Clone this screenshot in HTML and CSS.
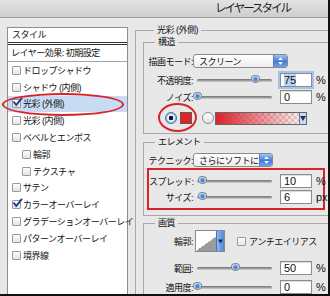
FILE: index.html
```html
<!doctype html>
<html>
<head>
  <meta charset="utf-8">
  <title>レイヤースタイル</title>
  <link rel="stylesheet" href="styles.css">
</head>
<body>
<div class="window">
  <div class="titlebar">レイヤースタイル</div>

  <div class="dialog">
    <div class="styles-panel">
      <div class="panel-head">スタイル</div>
      <div class="panel-preset">レイヤー効果: 初期設定</div>
      <ul class="fx-list">
        <li><span class="cb"></span>ドロップシャドウ</li>
        <li><span class="cb"></span>シャドウ (内側)</li>
        <li class="selected"><span class="cb checked"><svg width="11" height="10" viewBox="0 0 11 10"><path d="M1.5 4.5 L4.2 8 L10 0.8" fill="none" stroke="#1c3b8c" stroke-width="1.9"/></svg></span>光彩 (外側)<span class="ring"></span></li>
        <li><span class="cb"></span>光彩 (内側)</li>
        <li><span class="cb"></span>ベベルとエンボス</li>
        <li class="sub"><span class="cb"></span>輪郭</li>
        <li class="sub"><span class="cb"></span>テクスチャ</li>
        <li><span class="cb"></span>サテン</li>
        <li><span class="cb checked"><svg width="11" height="10" viewBox="0 0 11 10"><path d="M1.5 4.5 L4.2 8 L10 0.8" fill="none" stroke="#1c3b8c" stroke-width="1.9"/></svg></span>カラーオーバーレイ</li>
        <li><span class="cb"></span>グラデーションオーバーレイ</li>
        <li><span class="cb"></span>パターンオーバーレイ</li>
        <li><span class="cb"></span>境界線</li>
      </ul>
    </div>

    <div class="settings">
      <fieldset class="group outer">
        <legend>光彩 (外側)</legend>

        <fieldset class="group structure">
          <legend>構造</legend>
          <div class="row r-mode">
            <span class="label">描画モード:</span>
            <span class="select wide">スクリーン<span class="stepper"><svg width="14" height="12" viewBox="0 0 14 12"><path d="M7 2 L4.5 5 L9.5 5 Z M4.5 7 L9.5 7 L7 10 Z" fill="#fff"/></svg></span></span>
          </div>
          <div class="row r-opacity">
            <span class="label">不透明度:</span>
            <span class="slider"><span class="knob" style="left: 77%"></span></span>
            <span class="num focus"><span class="sel">75</span></span>
            <span class="unit">%</span>
          </div>
          <div class="row r-noise">
            <span class="label">ノイズ:</span>
            <span class="slider"><span class="knob" style="left: 0%"></span></span>
            <span class="num">0</span>
            <span class="unit">%</span>
          </div>
          <div class="row r-color">
            <span class="radio on"></span>
            <span class="swatch"></span>
            <span class="radio"></span>
            <span class="gradient"><span class="grad-drop"><svg width="6" height="5" viewBox="0 0 6 5"><path d="M0 0 L6 0 L3 5 Z" fill="#1b2f6b"/></svg></span></span>
            <span class="ring ring-color"></span>
          </div>
        </fieldset>

        <fieldset class="group element">
          <legend>エレメント</legend>
          <div class="row r-tech">
            <span class="label">テクニック:</span>
            <span class="select narrow">さらにソフトに<span class="stepper"><svg width="14" height="12" viewBox="0 0 14 12"><path d="M7 2 L4.5 5 L9.5 5 Z M4.5 7 L9.5 7 L7 10 Z" fill="#fff"/></svg></span></span>
          </div>
          <div class="hl">
            <div class="row">
              <span class="label">スプレッド:</span>
              <span class="slider"><span class="knob" style="left: 7%"></span></span>
              <span class="num">10</span>
              <span class="unit">%</span>
            </div>
            <div class="row r-size">
              <span class="label">サイズ:</span>
              <span class="slider"><span class="knob" style="left: 6%"></span></span>
              <span class="num">6</span>
              <span class="unit">px</span>
            </div>
          </div>
        </fieldset>

        <fieldset class="group quality">
          <legend>画質</legend>
          <div class="row r-contour">
            <span class="label">輪郭:</span>
            <span class="contour"><span class="contour-drop"><svg width="5" height="5" viewBox="0 0 5 5"><path d="M0 0.5 L5 0.5 L2.5 4.5 Z" fill="#14285e"/></svg></span></span>
            <span class="cb aa"></span>
            <span>アンチエイリアス</span>
          </div>
          <div class="row r-range">
            <span class="label">範囲:</span>
            <span class="slider"><span class="knob" style="left: 50%"></span></span>
            <span class="num">50</span>
            <span class="unit">%</span>
          </div>
          <div class="row r-jitter">
            <span class="label">適用度:</span>
            <span class="slider"><span class="knob" style="left: 0%"></span></span>
            <span class="num">0</span>
            <span class="unit">%</span>
          </div>
        </fieldset>
      </fieldset>
    </div>
  </div>
</div>
</body>
</html>
```

FILE: styles.css
```css
* {
  box-sizing: border-box;
}

body {
  margin: 0;
  background: #fff;
}

.window {
  width: 330px;
  height: 296px;
  overflow: hidden;
  border-right: 2px solid #111;
  border-bottom: 2px solid #111;
  background: #e8e8e8;
  font-family: "Liberation Sans", "Noto Sans CJK JP", sans-serif;
  font-size: 9px;
  letter-spacing: -0.5px;
  white-space: nowrap;
  color: #111;
}

.titlebar {
  height: 18px;
  padding-left: 215px;
  border-bottom: 1px solid #9d9d9d;
  background: linear-gradient(#e3e3e3, #cecece);
  font-size: 11.5px;
  letter-spacing: -2px;
  line-height: 17px;
  color: #1b1b1b;
}

.dialog {
  display: flex;
  align-items: flex-start;
}

/* left list of effects */

.styles-panel {
  flex: none;
  width: 121px;
  height: 300px;
  margin: 9px 0 0 7px;
  border: 1px solid #8d8d8d;
  background: #fff;
}

.panel-head {
  height: 17px;
  padding-left: 4px;
  border-bottom: 3px double #333;
  line-height: 14px;
}

.panel-preset {
  height: 17px;
  padding-left: 3px;
  border-bottom: 1px solid #a5a5a5;
  line-height: 16px;
}

.fx-list {
  margin: 0;
  padding: 0;
  list-style: none;
}

.fx-list li {
  position: relative;
  display: flex;
  align-items: center;
  height: 16.8px;
  padding-left: 4px;
}

.fx-list li.sub {
  padding-left: 14px;
}

.fx-list li.selected {
  background: #c8dbf3;
}

.cb {
  position: relative;
  flex: none;
  width: 9px;
  height: 9px;
  margin-right: 2px;
  border: 1px solid #9a9a9a;
  border-radius: 1px;
  background: linear-gradient(#fdfdfd, #e4e4e4);
}

.cb svg {
  position: absolute;
  left: -1px;
  top: -3px;
}

.ring {
  position: absolute;
  border: 2px solid #d7242b;
  border-radius: 50%;
}

.fx-list .ring {
  left: -6px;
  top: -3px;
  width: 122px;
  height: 23px;
}

/* right settings */

.settings {
  flex: none;
  width: 210px;
  margin-left: 7px;
}

.group {
  min-width: 0;
  margin: 0;
  padding: 0;
  border: 1px solid #a9a9a9;
}

.group legend {
  margin-left: 11px;
  padding: 0 3px;
  line-height: 12px;
}

.outer {
  margin-top: 6px;
  padding-left: 7px;
  height: 300px;
}

.structure {
  padding-bottom: 8px;
}

.element {
  margin-top: 2px;
  padding-bottom: 5px;
}

.quality {
  margin-top: 1px;
  height: 120px;
}

.row {
  position: relative;
  display: flex;
  align-items: center;
  height: 14px;
}

.label {
  flex: none;
  width: 49px;
  text-align: right;
}

.r-mode { margin-top: 6px; }
.r-opacity { margin-top: 5px; }
.r-noise { margin-top: 3px; }
.r-color { margin-top: 7px; }
.r-tech { margin-top: 5px; }
.r-size { margin-top: 2px; }
.r-contour { margin-top: 1px; height: 22px; }
.r-range { margin-top: 9px; }
.r-jitter { margin-top: 5px; }

.select {
  display: flex;
  align-items: center;
  height: 14px;
  padding-left: 5px;
  border: 1px solid #8a8a8a;
  border-radius: 3px;
  background: linear-gradient(#fff, #eee);
  overflow: hidden;
}

.select.wide { width: 95px; }
.select.narrow { width: 80px; }

.stepper {
  display: flex;
  align-items: center;
  justify-content: center;
  flex: none;
  width: 14px;
  height: 100%;
  margin-left: auto;
  border-left: 1px solid #5a7fb8;
  background: linear-gradient(#9cc3f3, #3f7cd6 55%, #6ea3ea);
}

.slider {
  position: relative;
  flex: none;
  width: 75px;
  height: 10px;
  margin-left: 4px;
}

.slider::before {
  content: "";
  position: absolute;
  left: 0;
  right: 0;
  top: 4px;
  height: 3px;
  border-radius: 2px;
  background: linear-gradient(#6e6e6e, #cfcfcf);
}

.knob {
  position: absolute;
  top: 0;
  width: 9px;
  height: 8px;
  margin-left: -4px;
  border: 1px solid #7d8797;
  border-radius: 50% 50% 50% 50% / 45% 45% 55% 55%;
  background: radial-gradient(circle at 50% 55%, #4d86d4 0 1.5px, #a9c4ea 2.5px, #eef2f8 4px);
}

.num {
  flex: none;
  width: 32px;
  height: 14px;
  margin-left: 8px;
  padding-left: 3px;
  border: 1px solid #8c8c8c;
  background: #fff;
  box-shadow: inset 0 1px 1px rgba(0, 0, 0, 0.15);
  font-size: 11px;
  letter-spacing: 0;
  line-height: 12px;
}

.num.focus {
  box-shadow: 0 0 0 2px #a4c2ea;
}

.sel {
  background: #b9d5f6;
}

.unit {
  margin-left: 4px;
  font-size: 11px;
  letter-spacing: 0;
}

.radio {
  flex: none;
  width: 12px;
  height: 12px;
  border: 1px solid #8a8a8a;
  border-radius: 50%;
  background: linear-gradient(#fff, #e2e2e2);
}

.radio.on {
  margin-left: 21px;
  border-color: #3e6cb0;
  background: radial-gradient(circle, #121212 0 2px, #f4f7fc 2.6px 3.4px, #9fc0ec 4.2px);
}

.swatch {
  flex: none;
  width: 12px;
  height: 12px;
  margin: 0 10px 0 3px;
  border: 1px solid #5a5a5a;
  background: #e0232b;
}

.gradient {
  display: flex;
  justify-content: flex-end;
  width: 92px;
  height: 13px;
  margin-left: 1px;
  border: 1px solid #666;
  background:
    linear-gradient(to right, #d9232a, rgba(217, 35, 42, 0)),
    repeating-conic-gradient(#d9d9d9 0 25%, #fff 0 50%) 0 0 / 6px 6px;
}

.grad-drop {
  display: flex;
  align-items: center;
  justify-content: center;
  width: 7px;
  border-left: 1px solid #777;
  background: #c9dbf3;
}

.ring-color {
  left: 14px;
  top: -8px;
  width: 39px;
  height: 29px;
}

.hl {
  width: 178px;
  margin: 1px 0 0 3px;
  padding: 4px 0;
  border: 2px solid #d7242b;
}

.hl .label {
  width: 44px;
}

.contour {
  display: flex;
  justify-content: flex-end;
  flex: none;
  width: 30px;
  height: 22px;
  margin-left: 2px;
  border: 1px solid #8a8a8a;
  background: linear-gradient(to bottom right, #fff 50%, #9b9b9b 50%);
}

.contour-drop {
  display: flex;
  align-items: center;
  justify-content: center;
  width: 8px;
  border-left: 1px solid #4a74b3;
  background: linear-gradient(to right, #8cb6ee, #4f88dc);
}

.cb.aa {
  width: 9px;
  height: 9px;
  margin: 0 3px 0 12px;
}
```
